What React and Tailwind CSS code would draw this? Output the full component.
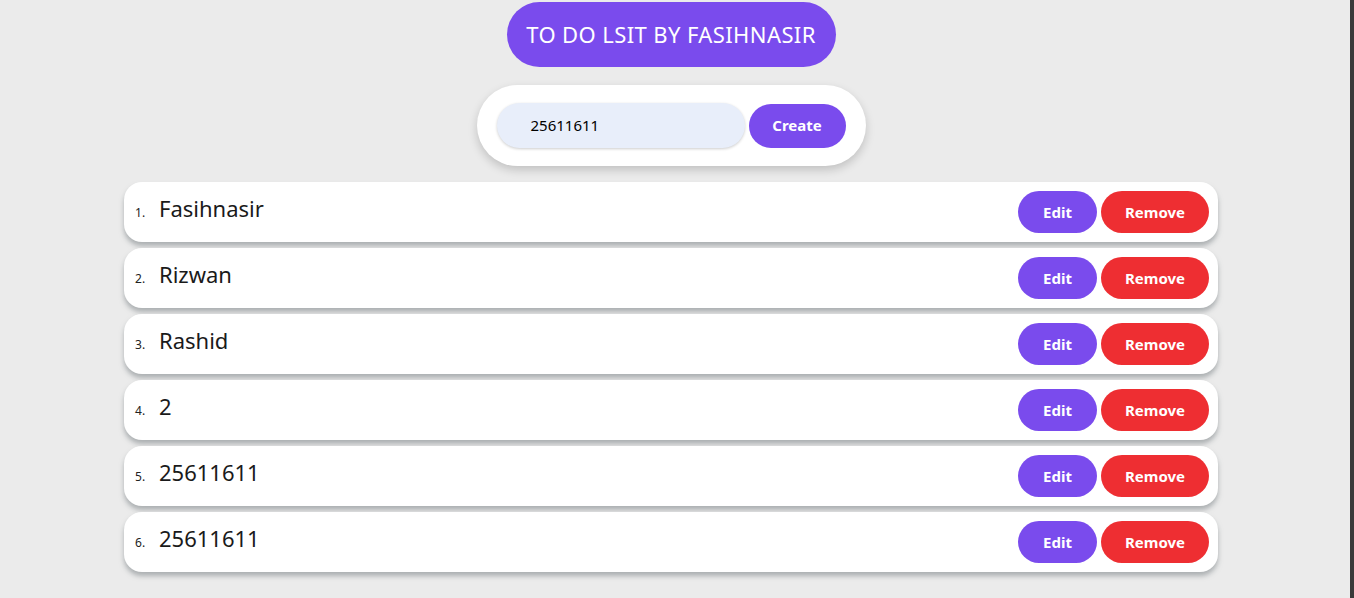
import React from "react";

const items = ["Fasihnasir", "Rizwan", "Rashid", "2", "25611611", "25611611"];

export default function App() {
  return (
    <div className="flex min-h-[598px] bg-[#ebebeb]" style={{ fontFamily: '"Noto Sans", sans-serif' }}>
      <div className="w-[1342px] flex flex-col items-center pt-[2px]">
        <div className="h-[65px] w-[329px] rounded-full bg-[#7a4bed] flex items-center justify-center text-white text-[22px] tracking-[0.4px]">
          TO DO LSIT BY FASIHNASIR
        </div>
        <div className="mt-[18px] h-[81px] w-[389px] rounded-full bg-white shadow-[0_4px_10px_rgba(0,0,0,0.18)] flex items-center pl-[20px] gap-[4px]">
          <div className="h-[45px] w-[248px] rounded-full bg-[#e8eefa] shadow-[0_1px_3px_rgba(0,0,0,0.2)] flex items-center pl-[34px] text-[15px] text-black">
            25611611
          </div>
          <button className="h-[44px] w-[97px] rounded-full bg-[#7a4bed] text-white font-bold text-[15px]">
            Create
          </button>
        </div>
        <div className="mt-[16px] w-[1094px] flex flex-col gap-[6px]">
          {items.map((t, i) => (
            <div
              key={i}
              className="h-[60px] rounded-[18px] bg-white shadow-[0_4px_5px_rgba(120,128,132,0.55)] flex items-start pl-[11px] pr-[9px] pt-[9px]"
            >
              <div className="flex items-baseline flex-1 pt-[3px]">
                <span className="w-[24px] text-[12px] text-[#222]">{i + 1}.</span>
                <span className="text-[22px] text-[#1a1a1a] leading-[28px]">{t}</span>
              </div>
              <button className="h-[42px] w-[79px] rounded-full bg-[#7a4bed] text-white font-bold text-[15px]">
                Edit
              </button>
              <button className="ml-[4px] h-[42px] w-[108px] rounded-full bg-[#ee2e32] text-white font-bold text-[15px]">
                Remove
              </button>
            </div>
          ))}
        </div>
      </div>
      <div className="flex-1" />
      <div className="w-[4px] bg-[#3a3a3a]" />
    </div>
  );
}
